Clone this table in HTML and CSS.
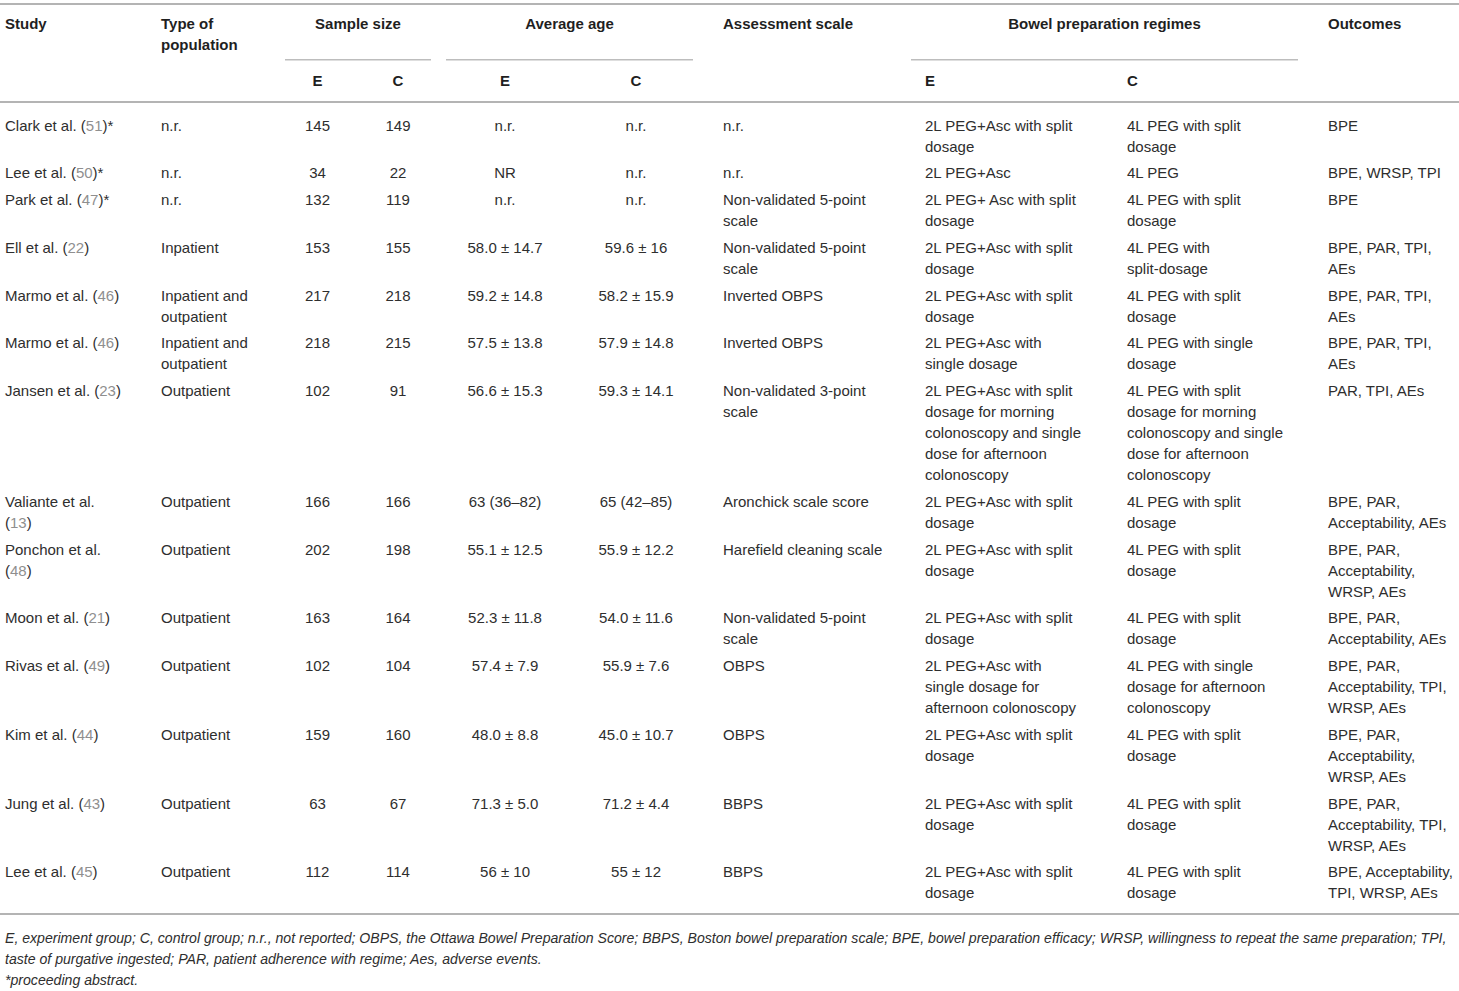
FILE: index.html
```html
<!DOCTYPE html>
<html lang="en">
<head>
<meta charset="utf-8">
<title>Table</title>
<link rel="stylesheet" href="styles.css">
</head>
<body>
<div class="wrap">
<table class="tbl">
  <colgroup>
    <col class="c1"><col class="c2"><col class="c3"><col class="c4"><col class="c5">
    <col class="c6"><col class="c7"><col class="c8"><col class="c9"><col class="c10">
  </colgroup>
  <thead>
    <tr class="h1">
      <th class="l first">Study</th>
      <th class="l">Type of population</th>
      <th class="grp" colspan="2">Sample size</th>
      <th class="grp" colspan="2">Average age</th>
      <th class="l">Assessment scale</th>
      <th class="grp" colspan="2">Bowel preparation regimes</th>
      <th class="l last">Outcomes</th>
    </tr>
    <tr class="h2">
      <th class="l first"></th>
      <th class="l"></th>
      <th class="ctr">E</th>
      <th class="ctr">C</th>
      <th class="ctr">E</th>
      <th class="ctr">C</th>
      <th class="l"></th>
      <th class="l be">E</th>
      <th class="l bc">C</th>
      <th class="l last"></th>
    </tr>
  </thead>
  <tbody>
    <tr>
      <td class="l first">Clark et al. <span class="nw">(<span class="ref">51</span>)*</span></td>
      <td class="l">n.r.</td>
      <td class="ctr">145</td><td class="ctr">149</td>
      <td class="ctr">n.r.</td><td class="ctr">n.r.</td>
      <td class="l">n.r.</td>
      <td class="l be">2L PEG+Asc with split dosage</td>
      <td class="l bc">4L PEG with split dosage</td>
      <td class="l last">BPE</td>
    </tr>
    <tr>
      <td class="l first">Lee et al. <span class="nw">(<span class="ref">50</span>)*</span></td>
      <td class="l">n.r.</td>
      <td class="ctr">34</td><td class="ctr">22</td>
      <td class="ctr">NR</td><td class="ctr">n.r.</td>
      <td class="l">n.r.</td>
      <td class="l be">2L PEG+Asc</td>
      <td class="l bc">4L PEG</td>
      <td class="l last">BPE, WRSP, TPI</td>
    </tr>
    <tr>
      <td class="l first">Park et al. <span class="nw">(<span class="ref">47</span>)*</span></td>
      <td class="l">n.r.</td>
      <td class="ctr">132</td><td class="ctr">119</td>
      <td class="ctr">n.r.</td><td class="ctr">n.r.</td>
      <td class="l">Non-validated 5-point scale</td>
      <td class="l be">2L PEG+ Asc with split dosage</td>
      <td class="l bc">4L PEG with split dosage</td>
      <td class="l last">BPE</td>
    </tr>
    <tr>
      <td class="l first">Ell et al. <span class="nw">(<span class="ref">22</span>)</span></td>
      <td class="l">Inpatient</td>
      <td class="ctr">153</td><td class="ctr">155</td>
      <td class="ctr">58.0 ± 14.7</td><td class="ctr">59.6 ± 16</td>
      <td class="l">Non-validated 5-point scale</td>
      <td class="l be">2L PEG+Asc with split dosage</td>
      <td class="l bc">4L PEG with <span class="nw">split-dosage</span></td>
      <td class="l last">BPE, PAR, TPI, AEs</td>
    </tr>
    <tr>
      <td class="l first">Marmo et al. <span class="nw">(<span class="ref">46</span>)</span></td>
      <td class="l">Inpatient and outpatient</td>
      <td class="ctr">217</td><td class="ctr">218</td>
      <td class="ctr">59.2 ± 14.8</td><td class="ctr">58.2 ± 15.9</td>
      <td class="l">Inverted OBPS</td>
      <td class="l be">2L PEG+Asc with split dosage</td>
      <td class="l bc">4L PEG with split dosage</td>
      <td class="l last">BPE, PAR, TPI, AEs</td>
    </tr>
    <tr>
      <td class="l first">Marmo et al. <span class="nw">(<span class="ref">46</span>)</span></td>
      <td class="l">Inpatient and outpatient</td>
      <td class="ctr">218</td><td class="ctr">215</td>
      <td class="ctr">57.5 ± 13.8</td><td class="ctr">57.9 ± 14.8</td>
      <td class="l">Inverted OBPS</td>
      <td class="l be">2L PEG+Asc with single dosage</td>
      <td class="l bc">4L PEG with single dosage</td>
      <td class="l last">BPE, PAR, TPI, AEs</td>
    </tr>
    <tr>
      <td class="l first">Jansen et al. <span class="nw">(<span class="ref">23</span>)</span></td>
      <td class="l">Outpatient</td>
      <td class="ctr">102</td><td class="ctr">91</td>
      <td class="ctr">56.6 ± 15.3</td><td class="ctr">59.3 ± 14.1</td>
      <td class="l">Non-validated 3-point scale</td>
      <td class="l be">2L PEG+Asc with split dosage for morning colonoscopy and single dose for afternoon colonoscopy</td>
      <td class="l bc">4L PEG with split dosage for morning colonoscopy and single dose for afternoon colonoscopy</td>
      <td class="l last">PAR, TPI, AEs</td>
    </tr>
    <tr>
      <td class="l first">Valiante et al. <span class="nw">(<span class="ref">13</span>)</span></td>
      <td class="l">Outpatient</td>
      <td class="ctr">166</td><td class="ctr">166</td>
      <td class="ctr">63 (36–82)</td><td class="ctr">65 (42–85)</td>
      <td class="l">Aronchick scale score</td>
      <td class="l be">2L PEG+Asc with split dosage</td>
      <td class="l bc">4L PEG with split dosage</td>
      <td class="l last">BPE, PAR, Acceptability, AEs</td>
    </tr>
    <tr>
      <td class="l first">Ponchon et al. <span class="nw">(<span class="ref">48</span>)</span></td>
      <td class="l">Outpatient</td>
      <td class="ctr">202</td><td class="ctr">198</td>
      <td class="ctr">55.1 ± 12.5</td><td class="ctr">55.9 ± 12.2</td>
      <td class="l">Harefield cleaning scale</td>
      <td class="l be">2L PEG+Asc with split dosage</td>
      <td class="l bc">4L PEG with split dosage</td>
      <td class="l last">BPE, PAR, Acceptability, WRSP, AEs</td>
    </tr>
    <tr>
      <td class="l first">Moon et al. <span class="nw">(<span class="ref">21</span>)</span></td>
      <td class="l">Outpatient</td>
      <td class="ctr">163</td><td class="ctr">164</td>
      <td class="ctr">52.3 ± 11.8</td><td class="ctr">54.0 ± 11.6</td>
      <td class="l">Non-validated 5-point scale</td>
      <td class="l be">2L PEG+Asc with split dosage</td>
      <td class="l bc">4L PEG with split dosage</td>
      <td class="l last">BPE, PAR, Acceptability, AEs</td>
    </tr>
    <tr>
      <td class="l first">Rivas et al. <span class="nw">(<span class="ref">49</span>)</span></td>
      <td class="l">Outpatient</td>
      <td class="ctr">102</td><td class="ctr">104</td>
      <td class="ctr">57.4 ± 7.9</td><td class="ctr">55.9 ± 7.6</td>
      <td class="l">OBPS</td>
      <td class="l be">2L PEG+Asc with single dosage for afternoon colonoscopy</td>
      <td class="l bc">4L PEG with single dosage for afternoon colonoscopy</td>
      <td class="l last">BPE, PAR, Acceptability, TPI, WRSP, AEs</td>
    </tr>
    <tr>
      <td class="l first">Kim et al. <span class="nw">(<span class="ref">44</span>)</span></td>
      <td class="l">Outpatient</td>
      <td class="ctr">159</td><td class="ctr">160</td>
      <td class="ctr">48.0 ± 8.8</td><td class="ctr">45.0 ± 10.7</td>
      <td class="l">OBPS</td>
      <td class="l be">2L PEG+Asc with split dosage</td>
      <td class="l bc">4L PEG with split dosage</td>
      <td class="l last">BPE, PAR, Acceptability, WRSP, AEs</td>
    </tr>
    <tr>
      <td class="l first">Jung et al. <span class="nw">(<span class="ref">43</span>)</span></td>
      <td class="l">Outpatient</td>
      <td class="ctr">63</td><td class="ctr">67</td>
      <td class="ctr">71.3 ± 5.0</td><td class="ctr">71.2 ± 4.4</td>
      <td class="l">BBPS</td>
      <td class="l be">2L PEG+Asc with split dosage</td>
      <td class="l bc">4L PEG with split dosage</td>
      <td class="l last">BPE, PAR, Acceptability, TPI, WRSP, AEs</td>
    </tr>
    <tr>
      <td class="l first">Lee et al. <span class="nw">(<span class="ref">45</span>)</span></td>
      <td class="l">Outpatient</td>
      <td class="ctr">112</td><td class="ctr">114</td>
      <td class="ctr">56 ± 10</td><td class="ctr">55 ± 12</td>
      <td class="l">BBPS</td>
      <td class="l be">2L PEG+Asc with split dosage</td>
      <td class="l bc">4L PEG with split dosage</td>
      <td class="l last">BPE, Acceptability, TPI, WRSP, AEs</td>
    </tr>
  </tbody>
</table>
<div class="notes">
  <p class="note">E, experiment group; C, control group; n.r., not reported; OBPS, the Ottawa Bowel Preparation Score; BBPS, Boston bowel preparation scale; BPE, bowel preparation efficacy; WRSP, willingness to repeat the same preparation; TPI, taste of purgative ingested; PAR, patient adherence with regime; Aes, adverse events.</p>
  <p class="note">*proceeding abstract.</p>
</div>
</div>
</body>
</html>
```

FILE: styles.css
```css
html, body {
  margin: 0;
  padding: 0;
  background: #ffffff;
}

body {
  font-family: "Liberation Sans", Arial, Helvetica, sans-serif;
  font-size: 15px;
  line-height: 21px;
  color: #2e2e2e;
}

.wrap {
  padding-top: 3px;
  width: 1459px;
}

.tbl {
  width: 1459px;
  table-layout: fixed;
  border-collapse: collapse;
  border-top: 2px solid #b4b4b4;
  border-bottom: 2px solid #b4b4b4;
}

.c1 { width: 146px; }
.c2 { width: 139px; }
.c3 { width: 65px; }
.c4 { width: 96px; }
.c5 { width: 118px; }
.c6 { width: 144px; }
.c7 { width: 203px; }
.c8 { width: 201px; }
.c9 { width: 201px; }
.c10 { width: 146px; }

.tbl th,
.tbl td {
  vertical-align: top;
  padding: 3px 15px 2.75px 15px;
  text-align: left;
}

.tbl th {
  font-weight: bold;
  color: #1f1f1f;
}

.tbl .first { padding-left: 5px; padding-right: 23px; }
.tbl .last { padding-left: 15px; padding-right: 0; }
.tbl .be { padding-left: 14px; padding-right: 29px; }
.tbl .bc { padding-left: 15px; padding-right: 28px; }

.tbl .ctr {
  text-align: center;
  padding-left: 0;
  padding-right: 0;
}

.tbl .h1 th {
  padding-top: 7.5px;
  padding-bottom: 6px;
}

.tbl .h1 .grp {
  text-align: center;
  padding-left: 0;
  padding-right: 15px;
  background: linear-gradient(#bdbdbd, #bdbdbd) left bottom / calc(100% - 15px) 1.5px no-repeat;
}

.tbl .h2 th {
  padding-top: 9px;
  padding-bottom: 10.5px;
  border-bottom: 2px solid #b4b4b4;
}

.tbl tbody tr:first-child td { padding-top: 11.5px; }
.tbl tbody tr:last-child td { padding-bottom: 10px; }

.ref { color: #8f8f8f; }

.nw { white-space: nowrap; }

.notes {
  padding: 13px 0 0 5px;
}

.note {
  margin: 0;
  font-size: 14.1px;
  font-style: italic;
  color: #2e2e2e;
}
```
